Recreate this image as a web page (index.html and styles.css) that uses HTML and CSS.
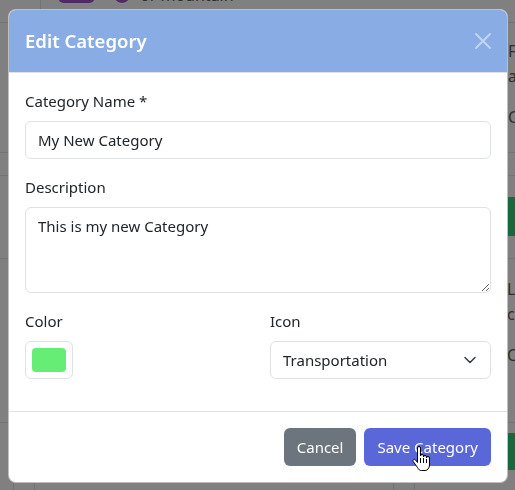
FILE: index.html
```html
<html lang="en">
<head>
    <meta charset="UTF-8">
    <title>Edit Category</title>
    <link rel="stylesheet" href="styles.css">
</head>
<body>

<div class="page">
    <div class="bg-row top-row">
        <div class="bg-cell narrow"></div>
        <div class="bg-cell tags">
            <span class="pill"></span>
            <span class="dot"></span>
            <span class="bg-text">or mountain</span>
        </div>
    </div>
    <div class="bg-row tall">
        <div class="side">
            <p class="bg-text">Fitness</p>
            <p class="bg-text">and</p>
            <p class="bg-text gap">Created</p>
        </div>
    </div>
    <div class="bg-row short"></div>
    <div class="bg-row action-row">
        <div class="side"><span class="green-btn"></span></div>
    </div>
    <div class="bg-row tall second">
        <div class="side">
            <p class="bg-text">Landscape</p>
            <p class="bg-text">clouds</p>
            <p class="bg-text gap">Created</p>
        </div>
    </div>
    <div class="bg-row last-row">
        <div class="bg-cell c-a"></div>
        <div class="bg-cell c-b"></div>
        <div class="bg-cell c-c"></div>
        <div class="bg-cell c-d"></div>
        <div class="side bottom"><span class="green-btn"></span></div>
    </div>
</div>

<div class="modal">
    <div class="modal-header">
        <h5 class="modal-title">Edit Category</h5>
        <svg class="close" width="16" height="16" viewBox="0 0 16 16">
            <path d="M1 1 L15 15 M15 1 L1 15" stroke="#FFFFFF" stroke-width="1.8" stroke-linecap="round"/>
        </svg>
    </div>

    <div class="modal-body">
        <div class="field">
            <label class="label">Category Name *</label>
            <input class="control" type="text" value="My New Category" readonly>
        </div>
        <div class="field">
            <label class="label">Description</label>
            <textarea class="control area" rows="3" readonly>This is my new Category</textarea>
        </div>
        <div class="field field-row">
            <div>
                <label class="label">Color</label>
                <div class="color-box"><span class="swatch"></span></div>
            </div>
            <div>
                <label class="label">Icon</label>
                <div class="control select">
                    <span>Transportation</span>
                    <svg width="16" height="16" viewBox="0 0 16 16">
                        <path d="M3 5.5 L8 10.5 L13 5.5" fill="none" stroke="#343A40" stroke-width="1.5" stroke-linecap="round" stroke-linejoin="round"/>
                    </svg>
                </div>
            </div>
        </div>
    </div>

    <div class="modal-footer">
        <button class="btn btn-secondary">Cancel</button>
        <button class="btn btn-primary">Save Category
            <svg class="cursor" width="18" height="26" viewBox="0 0 18 26">
                <path d="M5.5 2 a1.5 1.5 0 0 1 3 0 V10 a1.5 1.5 0 0 1 3 0 V11 a1.5 1.5 0 0 1 3 0 V12 a1.5 1.5 0 0 1 3 0 V19 c0 3 -2 5.5 -4.5 5.5 H9.5 c-2 0 -3 -1 -4 -3 L1.2 15.5 a1.4 1.4 0 0 1 2.4 -1.5 L5.5 16.5 Z"
                      fill="#FFFFFF" stroke="#000000" stroke-width="1" stroke-linejoin="round"/>
                <path d="M8.5 12 V17 M11.5 12 V17 M14.5 13 V17" stroke="#000000" stroke-width="1"/>
            </svg>
        </button>
    </div>
</div>

</body>
</html>
```

FILE: styles.css
```css
body {
    margin: 0;
    height: 490px;
    overflow: hidden;
    font-family: "Noto Sans", "Open Sans", sans-serif;
    font-size: 15px;
    background-color: #808080;
    color: #212529;
}

/* dimmed page behind the dialog */

.bg-row {
    display: flex;
    border-bottom: 1px solid #737373;
}

.top-row {
    height: 22px;
}

.tall {
    height: 129px;
}

.short {
    height: 22px;
}

.action-row {
    height: 82px;
}

.second {
    height: 163px;
}

.last-row {
    height: 67px;
    border-bottom: none;
}

.bg-cell {
    border-right: 1px solid #737373;
}

.narrow {
    width: 40px;
}

.tags {
    display: flex;
    align-items: flex-start;
    height: 22px;
    margin-top: -17px;
    padding-left: 17px;
    border-right: none;
}

.pill {
    flex: none;
    width: 37px;
    height: 20px;
    border-radius: 6px;
    background-color: #4E2A66;
}

.dot {
    flex: none;
    width: 16px;
    height: 16px;
    margin: 3px 0 0 18px;
    border-radius: 50%;
    background-color: #4E2A66;
    border: 1px solid #8A8A8A;
}

.tags .bg-text {
    margin: 2px 0 0 9px;
    line-height: 20px;
}

.bg-text {
    margin: 0;
    font-size: 16px;
    line-height: 25px;
    color: #2E2E2E;
    white-space: nowrap;
}

.side {
    margin-left: 508px;
    padding-top: 16px;
}

.gap {
    margin-top: 16px;
}

.second .side {
    padding-top: 18px;
    margin-left: 507px;
}

.green-btn {
    display: block;
    width: 80px;
    height: 39px;
    margin-top: 5px;
    margin-left: -2px;
    background-color: #1A673D;
}

.c-a {
    width: 15px;
}

.c-b {
    width: 24px;
}

.c-c {
    width: 420px;
}

.c-d {
    width: 23px;
}

.side.bottom {
    margin-left: 22px;
    padding-top: 10px;
}

.side.bottom .green-btn {
    margin-top: 0;
    height: 37px;
}

/* dialog */

.modal {
    position: fixed;
    top: 9px;
    left: 8px;
    width: 500px;
    box-sizing: border-box;
    background-color: #FFFFFF;
    border: 1px solid rgba(0, 0, 0, 0.25);
    border-radius: 8px;
}

.modal-header {
    display: flex;
    align-items: center;
    justify-content: space-between;
    padding: 16px;
    background-color: #89ACE5;
    border-bottom: 1px solid #DEE2E6;
    border-radius: 7px 7px 0 0;
}

.modal-title {
    margin: 0;
    font-size: 18.5px;
    line-height: 30px;
    font-weight: 600;
    color: #FFFFFF;
}

.close {
    opacity: 0.5;
}

.modal-body {
    padding: 16px;
}

.field {
    margin-bottom: 16px;
}

.label {
    display: block;
    margin-bottom: 8px;
    line-height: 24px;
}

.control {
    display: block;
    width: 100%;
    box-sizing: border-box;
    padding: 6px 12px;
    font-family: inherit;
    font-size: 15px;
    line-height: 24px;
    color: #212529;
    background-color: #FFFFFF;
    border: 1px solid #DEE2E6;
    border-radius: 6px;
    outline: none;
}

.area {
    height: 86px;
    resize: vertical;
}

.field-row {
    display: grid;
    grid-template-columns: 1fr 1fr;
    column-gap: 24px;
}

.color-box {
    display: flex;
    width: 48px;
    height: 38px;
    box-sizing: border-box;
    padding: 6px;
    border: 1px solid #DEE2E6;
    border-radius: 6px;
}

.swatch {
    flex: 1;
    border-radius: 4px;
    background-color: #66ED75;
}

.select {
    display: flex;
    align-items: center;
    justify-content: space-between;
}

.modal-footer {
    display: flex;
    justify-content: flex-end;
    gap: 8px;
    padding: 16px;
    border-top: 1px solid #DEE2E6;
}

.btn {
    position: relative;
    font-family: inherit;
    font-size: 15px;
    line-height: 24px;
    padding: 6px 12px;
    color: #FFFFFF;
    border: 1px solid transparent;
    border-radius: 6px;
}

.btn-secondary {
    background-color: #6C757D;
}

.btn-primary {
    background-color: #5A67D8;
}

.cursor {
    position: absolute;
    left: 47px;
    top: 17px;
}
```
